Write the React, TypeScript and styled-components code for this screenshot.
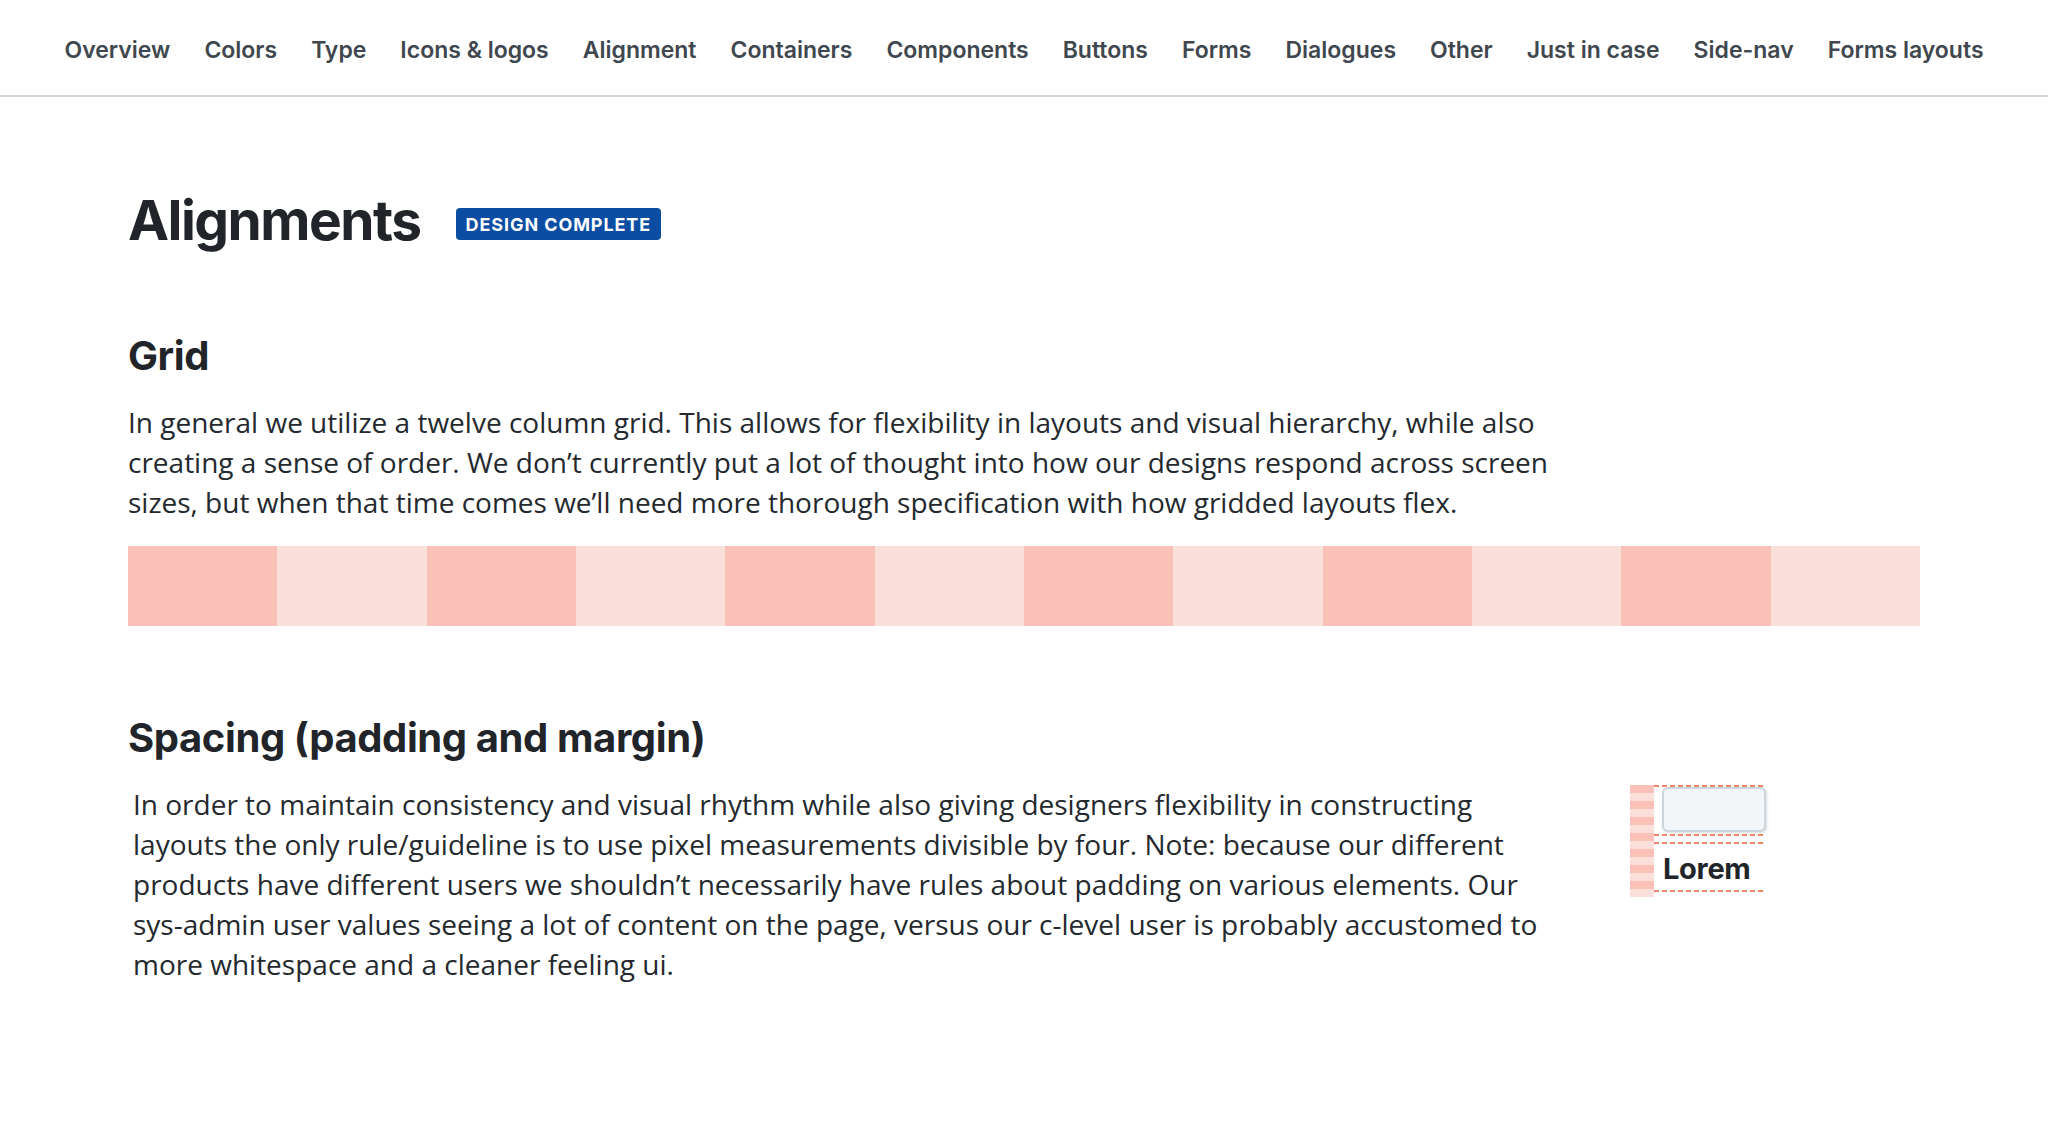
import React from "react";
import styled, { createGlobalStyle } from "styled-components";

const Global = createGlobalStyle`
  html, body { margin: 0; padding: 0; background: #ffffff; }
  body { font-family: "Open Sans", "Liberation Sans", sans-serif; color: #212529; }
  * { box-sizing: border-box; }
`;

const NavBar = styled.nav`
  height: 97px;
  border-bottom: 2px solid #d4d8dd;
  display: flex;
  align-items: center;
  justify-content: center;
  gap: 34px;
  padding-top: 5px;
`;

const NavLink = styled.a`
  font-family: Inter, "Liberation Sans", sans-serif;
  font-weight: 600;
  font-size: 23px;
  color: #40474e;
  text-decoration: none;
  white-space: nowrap;
`;

const Main = styled.main`
  padding: 0 128px;
`;

const TitleRow = styled.div`
  display: flex;
  align-items: flex-start;
  gap: 35px;
  margin-top: 91px;
`;

const Title = styled.h1`
  margin: 0;
  font-family: Inter, "Liberation Sans", sans-serif;
  font-weight: 700;
  font-size: 55px;
  line-height: 64px;
  letter-spacing: -1.5px;
  color: #212529;
`;

const Badge = styled.span`
  margin-top: 20px;
  height: 32px;
  padding: 0 10px;
  display: inline-flex;
  align-items: center;
  background: #0a4da2;
  color: #ffffff;
  border-radius: 4px;
  font-family: Inter, "Liberation Sans", sans-serif;
  font-weight: 700;
  font-size: 18px;
  letter-spacing: 0.9px;
  text-transform: uppercase;
`;

const SectionHeading = styled.h2<{ $top: number }>`
  margin: ${(p) => p.$top}px 0 0;
  font-family: Inter, "Liberation Sans", sans-serif;
  font-weight: 700;
  font-size: 40px;
  line-height: 48px;
  letter-spacing: -0.4px;
  color: #212529;
`;

const Paragraph = styled.p<{ $width: number; $indent?: number }>`
  margin: 22px 0 0;
  max-width: ${(p) => p.$width}px;
  padding-left: ${(p) => p.$indent ?? 0}px;
  font-family: "Open Sans", "Liberation Sans", sans-serif;
  font-size: 28px;
  line-height: 40px;
  color: #24292e;
`;

const GridBar = styled.div`
  margin-top: 24px;
  display: grid;
  grid-template-columns: repeat(12, 1fr);
  height: 80px;
`;

const GridCol = styled.div<{ $dark: boolean }>`
  background: ${(p) => (p.$dark ? "#f9c1b7" : "#fbdfda")};
`;

const SpacingRow = styled.div`
  display: flex;
  align-items: flex-start;
  margin-top: 22px;
`;

const SpacingText = styled(Paragraph)`
  margin: 0;
  flex: 0 0 ${(p) => p.$width}px;
`;

const Demo = styled.div`
  margin-left: ${1630 - 128 - 1430}px;
  margin-top: 1px;
  display: flex;
  align-items: flex-start;
`;

const Stripes = styled.div`
  width: 24px;
  height: 112px;
  background: repeating-linear-gradient(
    to bottom,
    #f9c1b7 0 8px,
    #fbdfda 8px 16px
  );
`;

const DemoStack = styled.div`
  width: 111px;
  display: flex;
  flex-direction: column;
`;

const Dash = styled.div<{ $gap?: number }>`
  height: 2px;
  margin-top: ${(p) => p.$gap ?? 0}px;
  background: repeating-linear-gradient(
    to right,
    #f0846b 0 5px,
    transparent 5px 8px
  );
`;

const InputBox = styled.div`
  margin-left: 8px;
  width: 104px;
  height: 45px;
  background: #f3f6f9;
  border: 2px solid #cdd5dc;
  border-radius: 6px;
  box-shadow: 1px 1px 3px rgba(40, 60, 80, 0.18);
`;

const DemoLabel = styled.div`
  margin: 7px 0 0 9px;
  font-family: Inter, "Liberation Sans", sans-serif;
  font-weight: 700;
  font-size: 29px;
  line-height: 36px;
  letter-spacing: -0.3px;
  color: #212529;
`;

const navItems = [
  "Overview",
  "Colors",
  "Type",
  "Icons & logos",
  "Alignment",
  "Containers",
  "Components",
  "Buttons",
  "Forms",
  "Dialogues",
  "Other",
  "Just in case",
  "Side-nav",
  "Forms layouts",
];

export default function App() {
  return (
    <>
      <Global />
      <NavBar>
        {navItems.map((n) => (
          <NavLink key={n} href="#">
            {n}
          </NavLink>
        ))}
      </NavBar>
      <Main>
        <TitleRow>
          <Title>Alignments</Title>
          <Badge>Design complete</Badge>
        </TitleRow>

        <SectionHeading $top={80}>Grid</SectionHeading>
        <Paragraph $width={1440}>
          In general we utilize a twelve column grid. This allows for flexibility in layouts and
          visual hierarchy, while also creating a sense of order. We don’t currently put a lot of
          thought into how our designs respond across screen sizes, but when that time comes we’ll
          need more thorough specification with how gridded layouts flex.
        </Paragraph>
        <GridBar>
          {Array.from({ length: 12 }).map((_, i) => (
            <GridCol key={i} $dark={i % 2 === 0} />
          ))}
        </GridBar>

        <SectionHeading $top={88}>Spacing (padding and margin)</SectionHeading>
        <SpacingRow>
          <SpacingText $width={1430} $indent={5}>
            In order to maintain consistency and visual rhythm while also giving designers
            flexibility in constructing layouts the only rule/guideline is to use pixel
            measurements divisible by four. Note: because our different products have different
            users we shouldn’t necessarily have rules about padding on various elements. Our
            sys-admin user values seeing a lot of content on the page, versus our c-level user is
            probably accustomed to more whitespace and a cleaner feeling ui.
          </SpacingText>
          <Demo>
            <Stripes />
            <DemoStack>
              <Dash />
              <InputBox />
              <Dash $gap={2} />
              <Dash $gap={6} />
              <DemoLabel>Lorem</DemoLabel>
              <Dash $gap={3} />
            </DemoStack>
          </Demo>
        </SpacingRow>
      </Main>
    </>
  );
}
